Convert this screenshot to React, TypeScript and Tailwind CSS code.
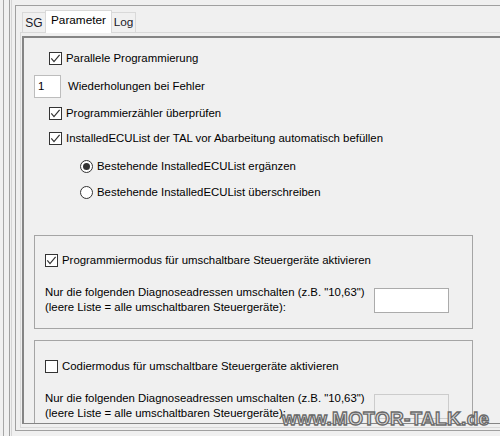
import React from "react";

function CheckBox({ checked }: { checked: boolean }) {
  return (
    <span className="w-[13px] h-[13px] border border-[#333333] bg-white shrink-0 flex items-center justify-center">
      {checked && (
        <svg width="11" height="11" viewBox="0 0 11 11">
          <path d="M1.3 5.3 L4 8.6 L9.6 1.8" fill="none" stroke="#333333" strokeWidth="1.2" />
        </svg>
      )}
    </span>
  );
}

function Radio({ checked }: { checked: boolean }) {
  return (
    <span className="w-[13px] h-[13px] rounded-full border border-[#333333] bg-white shrink-0 flex items-center justify-center">
      {checked && <span className="w-[7px] h-[7px] rounded-full bg-[#333333]" />}
    </span>
  );
}

function Group({
  checked,
  label,
  enabled,
  className,
  topClass,
}: {
  checked: boolean;
  label: string;
  enabled: boolean;
  className: string;
  topClass: string;
}) {
  return (
    <div className={"ml-[10px] w-[439px] shrink-0 border border-[#a5a5a5] " + className}>
      <div className={topClass + " ml-[10px] flex items-center h-[13px]"}>
        <CheckBox checked={checked} />
        <span className="ml-[4px] whitespace-nowrap">{label}</span>
      </div>
      <div className="mt-[18px] ml-[10px] flex">
        <div className="flex-1 leading-[15px] whitespace-nowrap">
          <div>Nur die folgenden Diagnoseadressen umschalten (z.B. "10,63")</div>
          <div>(leere Liste = alle umschaltbaren Steuergeräte):</div>
        </div>
        <div
          className={
            enabled
              ? "w-[75px] h-[25px] mt-[3px] mr-[23px] border border-[#ababab] bg-white shrink-0"
              : "w-[75px] h-[25px] mt-[3px] mr-[23px] border border-[#cccccc] bg-[#f0f0f0] shrink-0"
          }
        />
      </div>
    </div>
  );
}

export default function App() {
  return (
    <div className="w-[500px] h-[436px] overflow-hidden bg-[#f0f0f0] relative font-['Liberation_Sans',sans-serif] text-[11.4px] text-black">
      <div className="h-full pl-[3px] flex">
        <div className="h-full w-px bg-[#a7a7a7] shrink-0" />
        <div className="ml-[5px] h-full w-px bg-[#a0a0a0] shrink-0" />
        <div className="ml-[1px] h-full w-px bg-[#d5d5d5] shrink-0" />
        <div className="ml-[3px] mt-[5px] h-[426px] flex-1 border-l border-t border-b border-[#a0a0a0]">
          <div className="ml-[4px] mt-[4px] h-[418px] flex flex-col">
            {/* tabs */}
            <div className="h-[22px] flex items-end pl-[2px] shrink-0">
              <div className="w-[23px] h-[20px] border-t border-l border-[#d9d9d9] bg-[#f0f0f0] flex items-center justify-center text-[12px] text-[#1a1a2a]">
                SG
              </div>
              <div className="relative z-10 -mb-px w-[67px] h-[23px] border-t border-l border-r border-[#d9d9d9] bg-white flex items-center justify-center pb-[2px] text-[11.8px]">
                Parameter
              </div>
              <div className="w-[24px] h-[20px] border-t border-r border-[#d9d9d9] bg-[#f0f0f0] flex items-center justify-center text-[11.8px] text-[#1a1a2a]">
                Log
              </div>
            </div>
            {/* page */}
            <div className="h-[396px] border-l border-t border-b border-[#d9d9d9] pl-[1px] pt-[3px]">
              <div className="h-[388px] border-l-2 border-t-2 border-b border-[#858585] overflow-hidden flex flex-col">
                <div className="mt-[14px] ml-[25px] h-[13px] flex items-center">
                  <CheckBox checked />
                  <span className="ml-[4px] whitespace-nowrap">Parallele Programmierung</span>
                </div>
                <div className="mt-[10px] ml-[10px] h-[23px] flex items-center">
                  <div className="w-[27px] h-[23px] border border-[#bdbdbd] bg-white pl-[3px] flex items-center">1</div>
                  <span className="ml-[7px] whitespace-nowrap">Wiederholungen bei Fehler</span>
                </div>
                <div className="mt-[9px] ml-[25px] h-[13px] flex items-center">
                  <CheckBox checked />
                  <span className="ml-[4px] whitespace-nowrap">Programmierzähler überprüfen</span>
                </div>
                <div className="mt-[12px] ml-[25px] h-[13px] flex items-center">
                  <CheckBox checked />
                  <span className="ml-[4px] whitespace-nowrap">
                    InstalledECUList der TAL vor Abarbeitung automatisch befüllen
                  </span>
                </div>
                <div className="mt-[15px] ml-[56px] h-[13px] flex items-center">
                  <Radio checked />
                  <span className="ml-[4px] whitespace-nowrap">Bestehende InstalledECUList ergänzen</span>
                </div>
                <div className="mt-[13px] ml-[56px] h-[13px] flex items-center">
                  <Radio checked={false} />
                  <span className="ml-[4px] whitespace-nowrap">Bestehende InstalledECUList überschreiben</span>
                </div>
                <Group
                  className="mt-[36px] h-[94px]"
                  topClass="mt-[18px]"
                  checked
                  enabled
                  label="Programmiermodus für umschaltbare Steuergeräte aktivieren"
                />
                <Group
                  className="mt-[11px] h-[120px]"
                  topClass="mt-[19px]"
                  checked={false}
                  enabled={false}
                  label="Codiermodus für umschaltbare Steuergeräte aktivieren"
                />
              </div>
            </div>
          </div>
        </div>
      </div>
      <div className="absolute left-[282px] top-[409px] font-['Liberation_Sans',sans-serif] font-bold text-[19px] leading-none tracking-[0.3px] text-[#e4e4e4] [-webkit-text-stroke:1.3px_#6a6a6a] whitespace-nowrap">
        www.MOTOR-TALK.de
      </div>
    </div>
  );
}
